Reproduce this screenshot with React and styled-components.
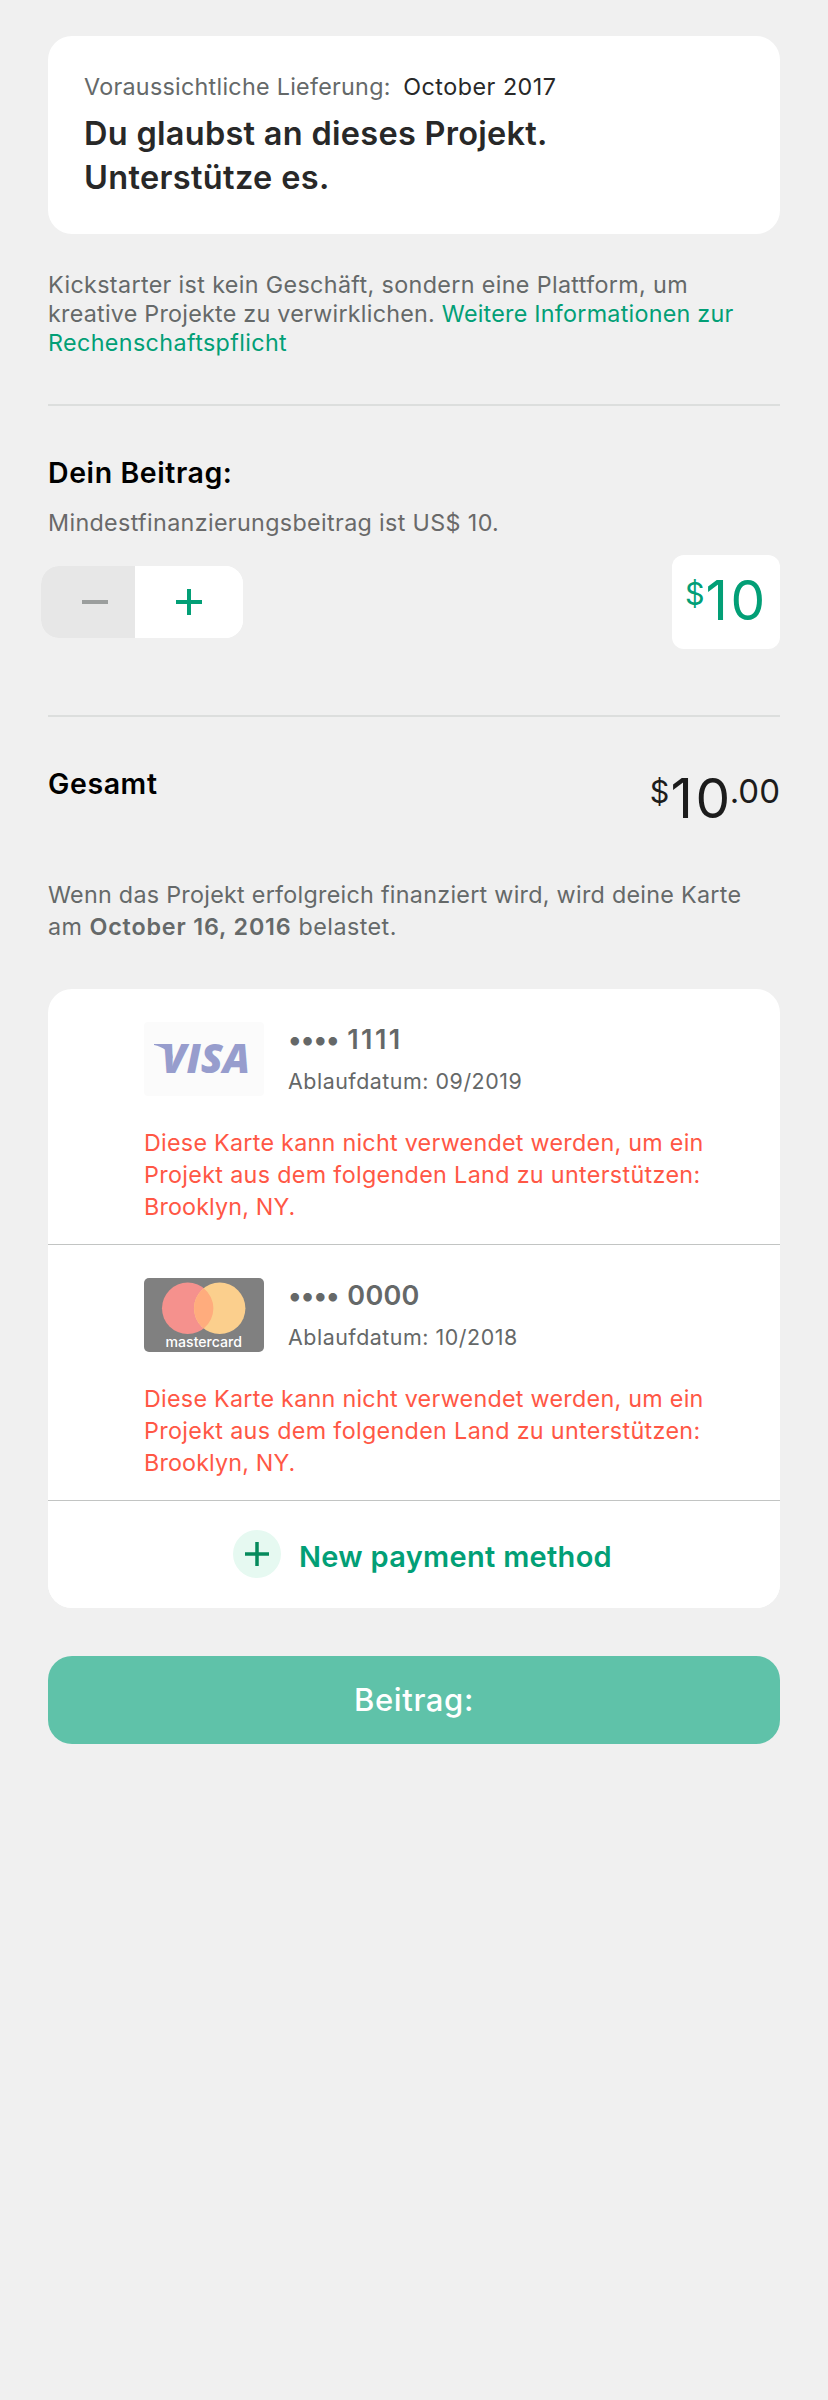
import React from "react";
import styled, { createGlobalStyle } from "styled-components";

const GlobalStyle = createGlobalStyle`
  * { box-sizing: border-box; }
  body {
    margin: 0;
    background: #f0f0f0;
    font-family: Inter, "Liberation Sans", sans-serif;
    color: #282828;
  }
  p, h1, h2 { margin: 0; font-weight: inherit; }
  button { font: inherit; border: 0; padding: 0; }
`;

const Page = styled.main`
  width: 828px;
  min-height: 2400px;
  padding: 36px 48px 0;
  background: #f0f0f0;
`;

const Line = styled.span`
  display: block;
  white-space: nowrap;
  letter-spacing: ${(p) => p.$tracking}px;
`;

const Run = styled.span`
  letter-spacing: ${(p) => p.$tracking}px;
`;

const RewardCard = styled.section`
  height: 198px;
  padding: 37px 36px 0;
  border-radius: 24px;
  background: #fff;
`;

const Delivery = styled.p`
  display: flex;
  gap: 12.5px;
  font-size: 23.3px;
  line-height: 28px;
  color: #656969;
`;

const DeliveryDate = styled.span`
  color: #282828;
  letter-spacing: 0.5px;
`;

const RewardTitle = styled.h1`
  margin-top: 11px;
  font-size: 32.5px;
  line-height: 44px;
  font-weight: 600;
`;

const Disclaimer = styled.p`
  margin-top: 37px;
  font-size: 23.3px;
  line-height: 28.8px;
  color: #656969;
`;

const Link = styled.a`
  color: #029f76;
`;

const Divider = styled.hr`
  height: 2px;
  margin: ${(p) => p.$top}px 0 49px;
  border: 0;
  background: #dcdedd;
`;

const Heading = styled.h2`
  font-size: 28.5px;
  line-height: 36px;
  font-weight: 600;
  color: #000;
  letter-spacing: ${(p) => p.$tracking}px;
`;

const Minimum = styled.p`
  margin-top: 18px;
  font-size: 23.3px;
  line-height: 28px;
  letter-spacing: 0.35px;
  color: #696969;
`;

const PledgeRow = styled.div`
  display: flex;
  align-items: center;
  justify-content: space-between;
  height: 94px;
  margin: 18px 0 0 -7px;
`;

const Stepper = styled.div`
  display: flex;
  width: 202px;
  height: 72px;
  border-radius: 18px;
  overflow: hidden;
  background: #fff;
`;

const StepButton = styled.button`
  display: flex;
  align-items: center;
  justify-content: center;
  width: ${(p) => (p.$muted ? 94 : 108)}px;
  padding-left: ${(p) => (p.$muted ? 14 : 0)}px;
  background: ${(p) => (p.$muted ? "#e7e7e7" : "#fff")};
  color: ${(p) => (p.$muted ? "#9b9e9d" : "#029f76")};
`;

const Icon = styled.svg`
  display: block;
  fill: none;
  stroke: currentColor;
`;

const AmountField = styled.div`
  width: 108px;
  height: 94px;
  padding: 15px 0 0 13px;
  border-radius: 12px;
  background: #fff;
  color: #029f76;
`;

const Money = styled.div`
  display: flex;
  align-items: flex-start;
`;

const Currency = styled.span`
  margin-right: 1px;
  padding-top: 6px;
  font-size: 30.5px;
  line-height: 36px;
`;

const Whole = styled.span`
  font-size: 55px;
  line-height: 60px;
  letter-spacing: 2.6px;
`;

const Cents = styled.span`
  margin-left: -3px;
  padding-top: 3px;
  font-size: 33px;
  line-height: 40px;
`;

const TotalRow = styled.div`
  display: flex;
  justify-content: space-between;
  height: 65px;
`;

const TotalAmount = styled.div`
  padding-top: 2px;
  color: #1c1c1c;
`;

const ChargeNote = styled.p`
  margin-top: 48px;
  font-size: 23.3px;
  line-height: 32px;
  color: #656969;

  b {
    font-weight: 600;
    letter-spacing: 0.85px;
  }
`;

const PaymentList = styled.section`
  margin-top: 46px;
  border-radius: 24px;
  overflow: hidden;
  background: #fff;
`;

const PaymentMethod = styled.article`
  height: 256px;
  padding: 33px 40px 0 96px;
  border-bottom: 1px solid #c2c4c3;
`;

const MethodHeader = styled.div`
  display: flex;
  gap: 24px;
  height: 74px;
`;

const MethodInfo = styled.div`
  padding-top: 2px;
  color: #656868;
`;

const CardNumber = styled.div`
  display: flex;
  gap: 8.5px;
  font-size: 27px;
  line-height: 32px;
  font-weight: 600;
`;

const Expiry = styled.div`
  margin-top: 11px;
  font-size: 21.4px;
  line-height: 28px;
  letter-spacing: 0.53px;
`;

const ErrorText = styled.p`
  margin-top: 31px;
  font-size: 23.3px;
  line-height: 32px;
  color: #ff5745;
`;

const NewMethod = styled.button`
  display: flex;
  align-items: center;
  gap: 18px;
  width: 100%;
  height: 107px;
  padding-left: 185px;
  background: #fff;
`;

const PlusBadge = styled.span`
  display: flex;
  align-items: center;
  justify-content: center;
  width: 48px;
  height: 48px;
  border-radius: 50%;
  background: #e6f9f1;
  color: #068a5c;
`;

const NewMethodLabel = styled.span`
  padding-top: 4px;
  font-size: 29px;
  font-weight: 600;
  letter-spacing: 0.3px;
  color: #029f76;
`;

const PledgeButton = styled.button`
  display: flex;
  align-items: center;
  justify-content: center;
  width: 100%;
  height: 88px;
  margin-top: 48px;
  border-radius: 24px;
  background: #5fc2a9;
  color: #fff;
  font-size: 31px;
  font-weight: 500;
  letter-spacing: 0.6px;
`;

const LogoText = styled.text`
  font-family: "${(p) => p.$family}", sans-serif;
  font-size: ${(p) => p.$size}px;
  font-weight: ${(p) => p.$weight};
  font-style: ${(p) => (p.$slanted ? "italic" : "normal")};
`;

function VisaLogo() {
  return (
    <svg width="120" height="74" viewBox="0 0 120 74" role="img" aria-label="Visa">
      <rect width="120" height="74" rx="4" fill="#fbfbfb" />
      <path d="M10 22H22C25 22 26.500 23.500 27 26L29 37C25 29 19 25 10 23Z" fill="#979dcd" />
      <LogoText
        x="17.500"
        y="51.300"
        fill="#979dcd"
        textLength="88.500"
        lengthAdjust="spacingAndGlyphs"
        $family="Open Sans"
        $size={41}
        $weight={800}
        $slanted
      >
        VISA
      </LogoText>
    </svg>
  );
}

function MastercardLogo() {
  return (
    <svg width="120" height="74" viewBox="0 0 120 74" role="img" aria-label="Mastercard">
      <rect width="120" height="74" rx="5" fill="#808080" />
      <circle cx="43.700" cy="30.300" r="25.700" fill="#f5918d" />
      <circle cx="75.700" cy="30.300" r="25.700" fill="#fbcf8d" />
      <path d="M59.700 10.200a25.700 25.700 0 0 1 0 40.200a25.700 25.700 0 0 1 0 -40.200Z" fill="#ffac7d" />
      <LogoText
        x="21.500"
        y="69"
        fill="#fff"
        textLength="76.500"
        lengthAdjust="spacingAndGlyphs"
        $family="Inter"
        $size={14}
        $weight={500}
      >
        mastercard
      </LogoText>
    </svg>
  );
}

function PlusIcon({ size, weight }) {
  const c = size / 2;
  return (
    <Icon width={size} height={size} strokeWidth={weight}>
      <path d={`M0 ${c}H${size}M${c} 0V${size}`} />
    </Icon>
  );
}

function MinusIcon() {
  return (
    <Icon width="26" height="4" strokeWidth="4">
      <path d="M0 2H26" />
    </Icon>
  );
}

function PaymentRow({ logo, digits, tracking, expiry }) {
  return (
    <PaymentMethod>
      <MethodHeader>
        {logo}
        <MethodInfo>
          <CardNumber>
            <Run $tracking={-0.9}>••••</Run>
            <Run $tracking={tracking}>{digits}</Run>
          </CardNumber>
          <Expiry>Ablaufdatum: {expiry}</Expiry>
        </MethodInfo>
      </MethodHeader>
      <ErrorText>
        <Line $tracking={0.27}>Diese Karte kann nicht verwendet werden, um ein</Line>
        <Line $tracking={0.34}>Projekt aus dem folgenden Land zu unterstützen:</Line>
        <Line $tracking={0.15}>Brooklyn, NY.</Line>
      </ErrorText>
    </PaymentMethod>
  );
}

export default function App() {
  return (
    <>
      <GlobalStyle />
      <Page>
        <RewardCard>
          <Delivery>
            <Run $tracking={0.28}>Voraussichtliche Lieferung:</Run>
            <DeliveryDate>October 2017</DeliveryDate>
          </Delivery>
          <RewardTitle>
            <Line $tracking={0.28}>Du glaubst an dieses Projekt.</Line>
            <Line $tracking={0.35}>Unterstütze es.</Line>
          </RewardTitle>
        </RewardCard>

        <Disclaimer>
          <Line $tracking={0.36}>Kickstarter ist kein Geschäft, sondern eine Plattform, um</Line>
          <Line $tracking={0.25}>
            kreative Projekte zu verwirklichen. <Link>Weitere Informationen zur</Link>
          </Line>
          <Line $tracking={0.38}>
            <Link>Rechenschaftspflicht</Link>
          </Line>
        </Disclaimer>

        <Divider $top={46.6} />

        <Heading $tracking={0.58}>Dein Beitrag:</Heading>
        <Minimum>Mindestfinanzierungsbeitrag ist US$ 10.</Minimum>
        <PledgeRow>
          <Stepper>
            <StepButton $muted aria-label="Weniger">
              <MinusIcon />
            </StepButton>
            <StepButton aria-label="Mehr">
              <PlusIcon size={26} weight={4} />
            </StepButton>
          </Stepper>
          <AmountField>
            <Money>
              <Currency>$</Currency>
              <Whole>10</Whole>
            </Money>
          </AmountField>
        </PledgeRow>

        <Divider $top={66} />

        <TotalRow>
          <Heading $tracking={0.6}>Gesamt</Heading>
          <TotalAmount>
            <Money>
              <Currency>$</Currency>
              <Whole>10</Whole>
              <Cents>.00</Cents>
            </Money>
          </TotalAmount>
        </TotalRow>

        <ChargeNote>
          <Line $tracking={0.28}>
            Wenn das Projekt erfolgreich finanziert wird, wird deine Karte
          </Line>
          <Line $tracking={0.45}>
            am <b>October 16, 2016</b> belastet.
          </Line>
        </ChargeNote>

        <PaymentList>
          <PaymentRow logo={<VisaLogo />} digits="1111" tracking={2.4} expiry="09/2019" />
          <PaymentRow logo={<MastercardLogo />} digits="0000" tracking={0.3} expiry="10/2018" />
          <NewMethod>
            <PlusBadge>
              <PlusIcon size={24} weight={3.5} />
            </PlusBadge>
            <NewMethodLabel>New payment method</NewMethodLabel>
          </NewMethod>
        </PaymentList>

        <PledgeButton>Beitrag:</PledgeButton>
      </Page>
    </>
  );
}
